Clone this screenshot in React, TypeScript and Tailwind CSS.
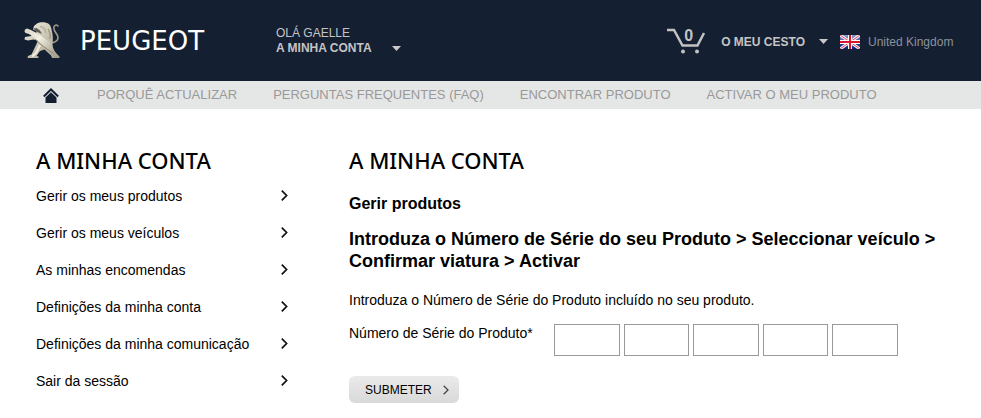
import type { ReactNode } from 'react';

const navLinks = [
  'PORQUÊ ACTUALIZAR',
  'PERGUNTAS FREQUENTES (FAQ)',
  'ENCONTRAR PRODUTO',
  'ACTIVAR O MEU PRODUTO',
];

const accountLinks = [
  'Gerir os meus produtos',
  'Gerir os meus veículos',
  'As minhas encomendas',
  'Definições da minha conta',
  'Definições da minha comunicação',
  'Sair da sessão',
];

function LionLogo() {
  return (
    <svg width="36" height="37" viewBox="0 0 36 37" aria-hidden="true">
      <defs>
        <linearGradient id="metal" x1="0" y1="0" x2="1" y2="1">
          <stop offset="0" stopColor="#f1eee2" />
          <stop offset="0.5" stopColor="#cbc6b4" />
          <stop offset="1" stopColor="#a09b8a" />
        </linearGradient>
        <linearGradient id="blade" x1="0" y1="0" x2="1" y2="0.8">
          <stop offset="0" stopColor="#d8d3c2" />
          <stop offset="0.5" stopColor="#f3f0e4" />
          <stop offset="1" stopColor="#b4af9e" />
        </linearGradient>
      </defs>
      <path d="M28 21C32 20 34.500 17.500 33.800 14.500C33 11.500 29.800 9.500 29.800 6C29.800 3 32.800 2 34.300 4.500" fill="none" stroke="#a09b89" strokeWidth="1.600" />
      <path d="M10 4L13 1.500C16 -0.300 22 -0.300 25 2C27.500 4.500 27.500 8 28 10C29 13 29 18 28.500 23C29 27 30.500 29.500 33 32L35.500 34.500V36H28L27 33.500L20.500 27.500L16 29L12.500 34L14.500 34.500V36H3.500L4 34L7.500 32.500L12.500 22L14 18.500L9 17.500L4 18.500L0.500 17.500L1 15L7 14L10 12L13 10L11 8.500L9 7.500Z" fill="url(#metal)" />
      <path d="M9.500 6.500L12.500 6L16 8.500L18 12L12 9.500Z" fill="#5f5c52" />
      <path d="M16 4.500C19.500 4.500 21 7 22 11" fill="none" stroke="#b4ae9c" strokeWidth="1.500" />
      <path d="M24 7C26 10 26.500 13 26 17" fill="none" stroke="#989382" strokeWidth="1.300" />
      <path d="M1 7.500L3 6.500L7 8C13 11 23 17 27 22C29.500 25 29 28 30 31C23 27 15 20 9.500 15L5 12L1.500 11L0.500 9.500Z" fill="url(#blade)" />
      <path d="M11 17C16 22 22 27 30 31.500" fill="none" stroke="#8c8777" strokeWidth="1" />
      <path d="M16 23L12 31L8 34.500" fill="none" stroke="#f3f0e4" strokeWidth="2" />
    </svg>
  );
}

function Caret() {
  return (
    <svg width="9" height="5" viewBox="0 0 9 5" aria-hidden="true">
      <path d="M0 0H9L4.500 5Z" fill="#c9c9c9" />
    </svg>
  );
}

function CartIcon() {
  return (
    <svg width="40" height="27" viewBox="0 0 40 27" aria-hidden="true">
      <path d="M0 2H7L15.500 17.500H30.500L37 5" fill="none" stroke="#c2c2c2" strokeWidth="2.500" />
      <circle cx="16" cy="23.500" r="2" fill="#c2c2c2" />
      <circle cx="30" cy="23.500" r="2" fill="#c2c2c2" />
    </svg>
  );
}

function UkFlag() {
  return (
    <svg width="20" height="14" viewBox="0 0 20 14" aria-hidden="true">
      <defs>
        <linearGradient id="flagBlue" x1="0" y1="0" x2="0" y2="1">
          <stop offset="0" stopColor="#8f9bc9" />
          <stop offset="0.500" stopColor="#3d509b" />
          <stop offset="1" stopColor="#0b1f78" />
        </linearGradient>
      </defs>
      <path d="M0 0H20V14H0Z" fill="url(#flagBlue)" />
      <path d="M0 0L20 14M20 0L0 14" stroke="#f5f5f8" strokeWidth="3" />
      <path d="M0 0L20 14M20 0L0 14" stroke="#e0455a" strokeWidth="1" />
      <path d="M10 0V14M0 7H20" stroke="#fff" strokeWidth="4" />
      <path d="M10 0V14M0 7H20" stroke="#db1530" strokeWidth="2" />
    </svg>
  );
}

function HomeIcon() {
  return (
    <svg width="16" height="15" viewBox="0 0 16 15" aria-hidden="true">
      <path d="M0.800 8.500L8 1.500L15.200 8.500" fill="none" stroke="#141f32" strokeWidth="2" />
      <path d="M8 4.300L13.500 9.500V15H2.500V9.500Z" fill="#141f32" />
    </svg>
  );
}

function Chevron({ small = false }: { small?: boolean }) {
  return small ? (
    <svg width="6" height="10" viewBox="0 0 6 10" aria-hidden="true">
      <path d="M0.700 0.700L5 5L0.700 9.300" fill="none" stroke="#444" strokeWidth="1.300" />
    </svg>
  ) : (
    <svg width="7" height="11" viewBox="0 0 7 11" aria-hidden="true">
      <path d="M0.800 0.600L5.600 5.500L0.800 10.400" fill="none" stroke="#111" strokeWidth="1.700" />
    </svg>
  );
}

function PageTitle({ children }: { children: ReactNode }) {
  return (
    <h2 className="font-['Noto_Sans',sans-serif] text-[22px] leading-[22px] font-medium">{children}</h2>
  );
}

export default function App() {
  return (
    <div className="min-h-screen bg-white font-['Liberation_Sans',Arial,sans-serif] text-sm text-black">
      <header className="flex h-[81px] items-center bg-[#141f32] px-6 text-xs text-[#c4c4c4]">
        <a href="#" className="flex w-[252px] shrink-0 items-center gap-5">
          <LionLogo />
          <span className="font-['DejaVu_Sans',sans-serif] text-[26px] leading-8 text-white">PEUGEOT</span>
        </a>
        <button type="button" className="flex items-end gap-5 text-left">
          <span className="leading-[15px]">
            OLÁ GAELLE
            <br />
            <strong>A MINHA CONTA</strong>
          </span>
          <span className="pb-[5px]">
            <Caret />
          </span>
        </button>
        <div className="ml-auto flex items-center pt-[2px]">
          <button type="button" className="flex items-center">
            <span className="relative mr-[14px]">
              <CartIcon />
              <strong className="absolute top-0 left-[17px] text-base leading-4">0</strong>
            </span>
            <strong className="mr-[14px]">O MEU CESTO</strong>
            <Caret />
          </button>
          <a href="#" className="ml-3 flex items-center gap-2 text-[#8d929b]">
            <UkFlag />
            <span className="min-w-[89px]">United Kingdom</span>
          </a>
        </div>
      </header>

      <nav className="flex h-7 items-center gap-9 bg-[#e5e7e6] pt-px pl-[43px] text-[13px] text-[#999]">
        <a href="#" aria-label="Início" className="mr-[2px]">
          <HomeIcon />
        </a>
        {navLinks.map((label) => (
          <a key={label} href="#" className="whitespace-nowrap">
            {label}
          </a>
        ))}
      </nav>

      <div className="flex gap-[61px] px-9 pt-10">
        <aside className="w-[252px] shrink-0">
          <PageTitle>A MINHA CONTA</PageTitle>
          <ul className="mt-[6px]">
            {accountLinks.map((label) => (
              <li key={label}>
                <a href="#" className="flex h-[37px] items-center justify-between">
                  {label}
                  <Chevron />
                </a>
              </li>
            ))}
          </ul>
        </aside>

        <main className="min-w-0 flex-1">
          <PageTitle>A MINHA CONTA</PageTitle>
          <h3 className="mt-[22px] text-base leading-[22px] font-bold">Gerir produtos</h3>
          <h4 className="mt-[13px] text-lg leading-[22px] font-bold">
            Introduza o Número de Série do seu Produto &gt; Seleccionar veículo &gt; Confirmar viatura &gt; Activar
          </h4>
          <p className="mt-[18px] leading-5">Introduza o Número de Série do Produto incluído no seu produto.</p>
          <form onSubmit={(event) => event.preventDefault()}>
            <div className="mt-[14px] flex">
              <label htmlFor="serial-1" className="w-[205px] leading-[18px]">
                Número de Série do Produto*
              </label>
              <div className="flex w-[344px] gap-1">
                {[1, 2, 3, 4, 5].map((part) => (
                  <input
                    key={part}
                    id={`serial-${part}`}
                    aria-label={`Número de Série do Produto ${part}`}
                    type="text"
                    className="h-8 min-w-0 flex-1 border border-[#999] bg-white px-2"
                  />
                ))}
              </div>
            </div>
            <button
              type="submit"
              className="mt-5 flex h-[27px] w-[110px] items-center justify-between rounded-md bg-linear-to-b from-[#eaeaea] to-[#d9d9d9] pt-px pr-[10px] pl-4 text-xs"
            >
              SUBMETER
              <Chevron small />
            </button>
          </form>
        </main>
      </div>
    </div>
  );
}
